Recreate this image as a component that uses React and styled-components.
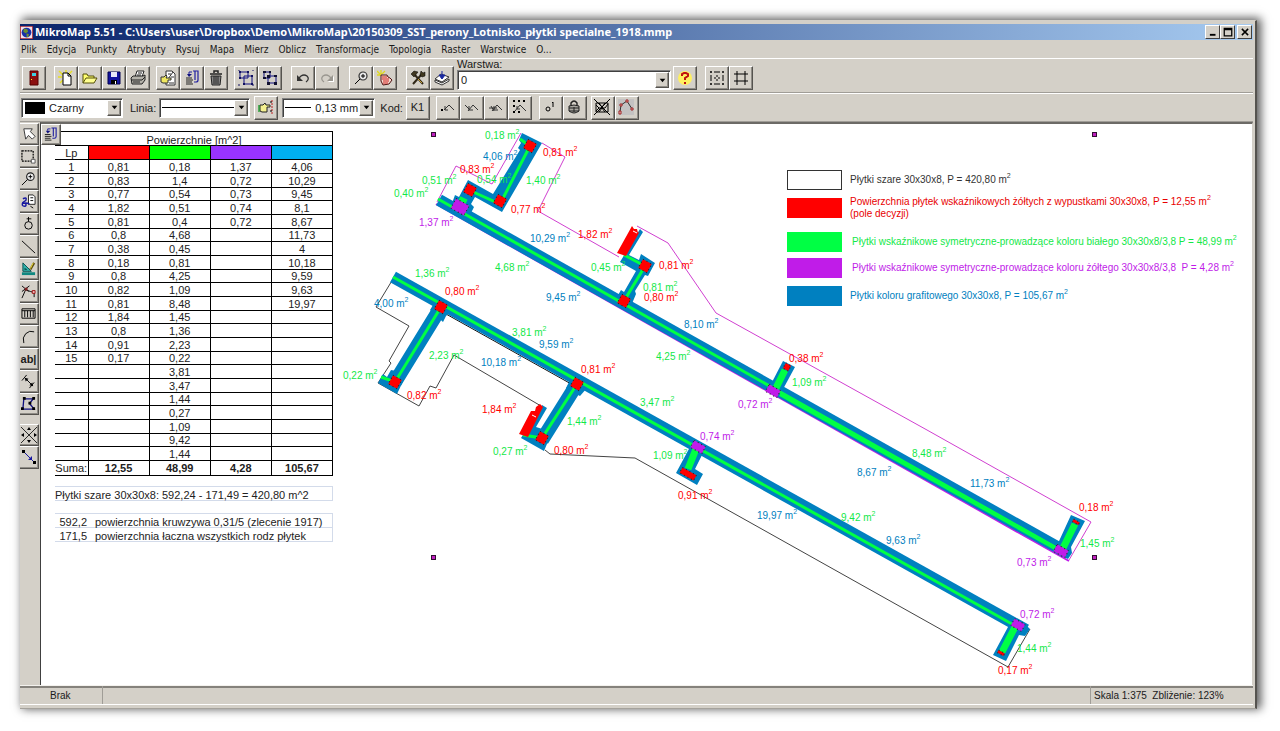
import styled, { createGlobalStyle, css } from "styled-components";
import { useState } from "react";

const GREEN = "#12e848";
const TILE_GREEN = "#00ff44";
const BLUE = "#0080c0";
const RED = "#ff0000";
const PURPLE = "#c01ce8";
const INK = "#000000";

const GlobalStyle = createGlobalStyle`
  * {
    box-sizing: border-box;
  }
  body {
    margin: 0;
    background: #fff;
    color: #1a1a1a;
    font-family: "Liberation Sans", Arial, sans-serif;
    font-size: 11px;
  }
  button, select {
    font: inherit;
    color: inherit;
  }
`;

const Page = styled.div`
  display: flex;
  min-height: 100vh;
  padding: 20px 23px 22px 20px;
  overflow: hidden;
`;

const Window = styled.div`
  flex: 1;
  min-width: 0;
  display: flex;
  flex-direction: column;
  background: #d4d0c8;
  border-top: 1px solid #d4d0c8;
  border-right: 2px solid #55534f;
  border-bottom: 1px solid #a5a29c;
  box-shadow: 3px -1px 9px 1px rgba(0, 0, 0, 0.65);
  padding: 3px 2px 3px 0;
`;

const TitleBar = styled.header`
  display: flex;
  align-items: center;
  height: 16px;
  padding-right: 1px;
  background: linear-gradient(to right, #0a246a, #a6caf0);
  color: #fff;
  font-family: "Noto Sans", "DejaVu Sans", sans-serif;
  font-weight: bold;
  font-size: 11px;
  line-height: 16px;
  white-space: nowrap;
  & h1 {
    flex: 1;
    margin: 0 0 0 2px;
    font-size: inherit;
  }
`;

const WindowButton = styled.button`
  display: flex;
  align-items: center;
  justify-content: center;
  width: 15px;
  height: 14px;
  margin-left: ${(props) => (props.$apart ? "2px" : "0")};
  padding: 0;
  background: #d4d0c8;
  border: 1px solid;
  border-color: #fff #404040 #404040 #fff;
`;

const MenuBar = styled.nav`
  display: flex;
  align-items: center;
  gap: 10px;
  height: 18px;
  padding: 0 1px;
  font-family: "DejaVu Sans Condensed", "DejaVu Sans", sans-serif;
  font-size: 10px;
  white-space: nowrap;
  & a {
    color: inherit;
    text-decoration: none;
  }
`;

const Toolbar = styled.div`
  display: flex;
  align-items: ${(props) => (props.$tall ? "flex-end" : "center")};
  height: ${(props) => (props.$tall ? "35px" : "29px")};
  padding: ${(props) => (props.$tall ? "0 0 2px 2px" : "0 0 0 1px")};
  border-top: 1px solid #fff;
  border-bottom: 1px solid #a09d97;
  white-space: nowrap;
`;

const Group = styled.div`
  display: flex;
  align-items: center;
  margin-right: ${(props) => props.$after || "6px"};
`;

const bevel = css`
  border: 1px solid;
  border-color: #fff #55534f #55534f #fff;
  box-shadow: inset -1px -1px 0 #8f8c86;
`;

const ToolButton = styled.button`
  display: flex;
  align-items: center;
  justify-content: center;
  width: 24px;
  height: 24px;
  padding: 0 1px 1px 0;
  background: #d4d0c8;
  ${bevel}
`;

const SideBar = styled.div`
  display: flex;
  flex-direction: column;
  width: 19px;
  padding-top: 1px;
  & button {
    width: 19px;
    height: 22px;
    border-left: 0;
  }
  & button:nth-child(even) {
    height: 23px;
  }
`;

const SideGap = styled.div`
  height: 9px;
`;

const ComboBox = styled.span`
  display: grid;
  align-items: center;
  width: ${(props) => props.$width};
  height: 20px;
  background: #fff;
  border: 1px solid;
  border-color: #808080 #fff #fff #808080;
  box-shadow: inset 1px 1px 0 #404040;
  & > * {
    grid-area: 1 / 1;
  }
  & select {
    width: 100%;
    height: 18px;
    padding: 0 0 0 ${(props) => props.$indent || "3px"};
    border: 0;
    background: none;
    appearance: none;
  }
`;

const ComboArrow = styled.span`
  justify-self: end;
  display: flex;
  align-items: center;
  justify-content: center;
  width: 14px;
  height: 16px;
  margin-right: 1px;
  background: #d4d0c8;
  pointer-events: none;
  ${bevel}
`;

const Swatch = styled.span`
  width: 20px;
  height: 12px;
  margin-left: 3px;
  background: #000;
`;

const LineSample = styled.span`
  width: ${(props) => props.$width};
  height: 1px;
  margin-left: 2px;
  background: #000;
`;

const Label = styled.label`
  margin-right: 3px;
`;

const LayerField = styled.div`
  display: flex;
  flex-direction: column;
  margin: 0 2px 0 -3px;
  flex: none;
  line-height: 12px;
`;

const Workspace = styled.div`
  flex: 1;
  display: flex;
`;

const Canvas = styled.main`
  position: relative;
  flex: 1;
  min-width: 0;
  display: flex;
  align-items: flex-start;
  margin-left: 1px;
  background: #fff;
  border-top: 2px solid #6c6a66;
  border-left: 1px solid #404040;
  border-right: 1px solid #d4d0c8;
  overflow: hidden;
`;

const SheetButton = styled(ToolButton)`
  position: absolute;
  top: 0;
  left: 0;
  width: 20px;
  height: 21px;
`;

const Sheet = styled.section`
  flex: none;
  width: 299px;
  padding: 7px 7px 0 14px;
  color: #222;
`;

const AreaTable = styled.table`
  width: 278px;
  table-layout: fixed;
  border-collapse: collapse;
  font-size: 11px;
  line-height: 11px;
  text-align: center;
  & caption {
    height: 14px;
    padding: 2px 0 0;
    border: 1px solid #000;
    border-bottom: 0;
    line-height: 12px;
  }
  & th, & td {
    height: 14px;
    padding: 1px 0 0;
    border: 1px solid #000;
    font-weight: normal;
  }
  & tr > :first-child {
    border-left: 0;
  }
  & tbody tr:nth-child(3n) > * {
    height: 13px;
    padding: 0;
  }
  & tfoot td {
    font-weight: bold;
  }
  & tfoot > tr > * {
    height: 15px;
  }
`;

const HeadCell = styled.th`
  background: ${(props) => props.$color || "none"};
`;

const Notes = styled.div`
  margin-top: 10px;
  color: #222;
`;

const Note = styled.p`
  display: flex;
  gap: 8px;
  height: 14px;
  margin: 0 0 ${(props) => props.$after || "0"};
  border: 1px solid #d3dbea;
  border-width: 1px 1px 0 0;
  line-height: 16px;
  white-space: nowrap;
  box-shadow: 0 1px 0 #d3dbea;
  & b {
    width: 32px;
    font-weight: normal;
    text-align: right;
  }
`;

const Plan = styled.section`
  flex: none;
  display: grid;
  & > * {
    grid-area: 1 / 1;
  }
  & text {
    font-size: 10px;
  }
  & tspan {
    font-size: 7px;
  }
`;

const Legend = styled.ul`
  width: 464px;
  margin: 46px 0 0 447px;
  padding: 0;
  list-style: none;
  font-size: 10px;
  line-height: 12px;
`;

const LegendItem = styled.li`
  display: flex;
  align-items: center;
  gap: ${(props) => (props.$wide ? "10px" : "8px")};
  height: 20px;
  margin-bottom: ${(props) => props.$after || "8px"};
  color: ${(props) => props.$color};
  white-space: pre;
  & i {
    width: 55px;
    height: 20px;
    background: ${(props) => props.$fill};
    border: ${(props) => (props.$fill === "#fff" ? "1px solid #333" : "0")};
  }
  & sup {
    font-size: 7px;
    line-height: 0;
    vertical-align: 5px;
  }
`;

const StatusBar = styled.footer`
  display: flex;
  height: 20px;
  font-size: 10px;
  line-height: 16px;
  border-top: 1px solid #f4f2ee;
  border-bottom: 1px solid #fff;
  box-shadow: inset 0 2px 0 #85827c;
  & span {
    padding: 2px 3px 0;
    border-right: 1px solid #a09d97;
  }
`;

const StatusMode = styled.span`
  width: 83px;
  && {
    padding-left: 30px;
  }
`;

const StatusFill = styled.span`
  flex: 1;
`;

const StatusScale = styled.span`
  width: 162px;
  white-space: pre;
  && {
    border-right: 0;
  }
`;

const line = { fill: "none", stroke: INK };
const navy = { fill: "none", stroke: "#101080", strokeWidth: 1.4 };

// every glyph is drawn on a 16 x 16 grid
const glyphs = {
  globe: (
    <>
      <path d="M0 0H16V16H0Z" fill="#f3e3ea" stroke="#a02030" strokeWidth="2" />
      <circle cx="8" cy="8" r="6" fill="#1830a8" />
      <path d="M5 3l4 1 1 3-3 2-3-2zM8 9l3 1-1 4-2-1z" fill="#6f8f30" />
    </>
  ),
  exit: (
    <>
      <path d="M4 1H12V15H4Z" fill="#8c1010" stroke="#500" />
      <path d="M6 3h4v3H6z" fill="#3fd0e0" />
      <path d="M5 9h1v1H5z" fill="#ff0" />
    </>
  ),
  fresh: (
    <>
      <path d="M1 1l4 4M8 0v4M0 7h4M2 13l3-3M14 1l-3 3" stroke="#e8e020" strokeWidth="1.4" />
      <path d="M5 3h5l3 3v9H5z" fill="#fff" stroke={INK} />
      <path d="M10 3v3h3" {...line} />
    </>
  ),
  open: (
    <>
      <path d="M1 13V4h4l1 2h6v2" fill="#ffff70" stroke="#55500a" />
      <path d="M1 13L4 8h11l-3 5z" fill="#ffff90" stroke="#55500a" />
    </>
  ),
  save: (
    <>
      <path d="M2 2H14V14H2Z" fill="#1414a0" stroke="#000050" />
      <path d="M5 2h6v5H5z" fill="#e8e8f8" />
      <path d="M5 10h6v4H5z" fill="#000" />
      <path d="M9 11h1v3H9z" fill="#fff" />
    </>
  ),
  print: (
    <>
      <path d="M5 7L7 1h7l-2 6" fill="#fff" stroke="#222" />
      <path d="M1 8l2-2h10l2-1v5l-3 4H2z" fill="#b4b2aa" stroke="#222" />
      <path d="M1 10h11l3-3M8 3h4M7 5h4M3 12h7" fill="none" stroke="#222" />
    </>
  ),
  hand: (
    <>
      <path d="M6 1h6l3 3v11H6z" fill="#fff" stroke="#333" />
      <path d="M8 4h3M11 7h3M9 13h5M13 2L8 9" fill="none" stroke="#333" />
      <path d="M1 7h3l2-2 1 1-1 2h5v2H8v3H3L1 12z" fill="#f0e860" stroke="#333" />
    </>
  ),
  report: (
    <>
      <path d="M9 1h5v9q0 2-2 2h-2M11 1v9" fill="none" stroke="#2020a0" strokeWidth="1.2" />
      <path d="M8 2H5v2" fill="none" stroke="#2020a0" />
      <path d="M3 4h5L5 7z" fill="#101080" />
      <path d="M2 8h6M2 10h7M2 12h6M2 14h7" stroke="#222" />
    </>
  ),
  trash: (
    <>
      <path d="M2 4h12M6 3V1h4v2" stroke="#222" fill="none" strokeWidth="1.5" />
      <path d="M3 6h10l-1 9H4z" fill="#888" stroke="#222" />
      <path d="M6 6v8M8 6v8M10 6v8" stroke="#222" />
    </>
  ),
  group: (
    <>
      <path d="M2 2h8v6H2zM6 6h8v8H6z" {...navy} strokeWidth="1" />
      <path d="M1 1h2v2H1zM9 1h2v2H9zM1 7h2v2H1zM13 5h2v2h-2zM5 13h2v2H5zM13 13h2v2h-2z" fill="#101060" />
      <path d="M0 0h2M14 0h2M0 15h2M14 15h2" stroke="#101060" />
    </>
  ),
  ungroup: (
    <>
      <path d="M2 2h6v6H2zM6 6h8v7H6z" {...navy} strokeWidth="1" />
      <path d="M1 1h3v2H1zM7 1h2v2H7zM1 7h3v2H1zM12 5h3v2h-3zM5 12h3v3H5zM12 12h3v3h-3zM5 5h3v3H5z" fill="#101030" />
    </>
  ),
  undo: (
    <>
      <path d="M3 9l3-3q3-2 6 0 3 3-1 6" fill="none" stroke="#333" strokeWidth="1.3" />
      <path d="M2 5v6h6z" fill="#333" />
    </>
  ),
  redo: (
    <>
      <path d="M13 9l-3-3q-3-2-6 0-3 3 1 6" fill="none" stroke="#9a9790" strokeWidth="1.3" />
      <path d="M15 6v6H9z" fill="#fff" />
      <path d="M14 5v6H8z" fill="#9a9790" />
    </>
  ),
  find: (
    <>
      <circle cx="10" cy="6" r="4" fill="#e8e8e8" stroke="#333" strokeWidth="1.2" />
      <path d="M9 5h2v2H9zM7 9l-5 5" {...line} />
    </>
  ),
  redHand: (
    <>
      <path d="M0 1l4 4M4 0v4M0 5h4M8 1L5 4" stroke="#e0d820" strokeWidth="1.3" />
      <path d="M4 5h6l1 2 2 1 2 2-3 4-6 1-2-4z" fill="#f4dcd0" stroke="#501010" />
      <path d="M5 7h5M5 9h7M6 11h6M6 13h5" stroke="#d02020" />
    </>
  ),
  tools: (
    <>
      <path d="M3 14L12 4M4 4l9 10" stroke="#302818" strokeWidth="2" />
      <path d="M1 4l3-3 4 1-4 5zM10 5l1-4 2 2 2-1v4l-3 1z" fill="#403820" stroke={INK} strokeWidth=".5" />
      <path d="M8 9l4 4" stroke="#c8a030" />
    </>
  ),
  layers: (
    <>
      <path d="M1 12l7 3 7-4v-2l-7 4-7-3z" fill="#fff" stroke="#333" />
      <path d="M1 9l6-5 8 3-7 5z" fill="#fff" stroke="#333" />
      <path d="M8 1v4M5 5l3 4 3-4z" fill="#1828a0" stroke="#1828a0" />
    </>
  ),
  help: (
    <>
      <circle cx="8" cy="8" r="7" fill="#fff060" />
      <path d="M5 6V4l2-1h2l2 1v2L8 8v2" fill="none" stroke="#c01010" strokeWidth="2" />
      <path d="M7 12h2v2H7z" fill="#c01010" />
    </>
  ),
  grid: (
    <path
      d="M1 2h15M1 8h15M1 14h15M2 1v15M8 1v15M14 1v15"
      {...line}
      strokeDasharray="2 2"
    />
  ),
  hash: <path d="M4 1v14M12 1v14M1 4h14M1 11h14" {...line} />,
  pointHand: (
    <>
      <path d="M2 6h3l2-2 1 2h4v2H9v5H4l-2-1z" fill="#f4f090" stroke="#222" />
      <path d="M1 6v7" stroke="#20a030" strokeWidth="1.4" />
      <path d="M14 1v14" stroke="#c02020" strokeDasharray="2 1" />
      <path d="M12 3h2M12 12h2" stroke={INK} />
    </>
  ),
  node1: (
    <>
      <path d="M5 11l5-5 5 5M6 7v4h3" fill="none" stroke="#333" />
      <path d="M2 10h2v2H2z" fill={INK} />
    </>
  ),
  node2: <path d="M2 6l4 4M5 12l5-6 5 5M6 7v4h4" fill="none" stroke="#333" />,
  node3: <path d="M2 9h8M4 7l3 5M5 12l5-6 5 5M7 7v4h4" fill="none" stroke="#333" />,
  node4: (
    <>
      <path d="M2 1h2v2H2zM7 1h2v2H7zM12 1h2v2h-2zM2 6h2v2H2zM2 12h2v2H2zM7 12h2v2H7z" fill={INK} />
      <path d="M4 12l5-6 6 6M6 7v3h3" fill="none" stroke="#333" />
    </>
  ),
  point1: (
    <>
      <circle cx="6" cy="10" r="2" {...line} />
      <path d="M10 4l1-1v5" {...line} />
    </>
  ),
  lock: (
    <>
      <path d="M5 7V4q3-4 6 0v3" fill="none" stroke="#222" strokeWidth="1.4" />
      <path d="M3 7q5-2 10 0v5q-5 4-10 0z" fill="#a8a6a0" stroke="#222" />
      <path d="M3 9h10M3 12h10M8 8v5" stroke="#222" />
    </>
  ),
  noMesh: (
    <>
      <path d="M2 4h12v9H2zM2 6l3 3-3 3M5 9h6M11 9l3-4M5 4l3 4 3-4M5 13l3-4 3 4" {...line} />
      <path d="M0 0l16 16M16 0L0 16" {...line} />
    </>
  ),
  curve: (
    <>
      <path d="M0 0h16v16H0z" fill="#c4c2c2" />
      <path d="M2 13L3 6l6-4 5 8" fill="none" stroke="#333" />
      <path d="M1 12h2v3H1zM2 5h2v2H2zM8 1h2v2H8zM13 9h2v2h-2z" fill="#f0d0d0" stroke="#a02020" />
    </>
  ),
  select: <path d="M3 3h9l-2 3 5 5-3 3-4-4-3 4z" fill="#fff" stroke="#333" />,
  marquee: (
    <>
      <path d="M1 2h12v11H1z" {...line} strokeWidth="1.3" strokeDasharray="2 1" />
      <path d="M11 11h4v4h-4z" fill="#fff" stroke="#555" />
    </>
  ),
  zoom: (
    <>
      <circle cx="10" cy="6" r="4" fill="#eee" stroke="#222" strokeWidth="1.2" />
      <path d="M8 6h4M10 4v4M7 9l-6 6" {...line} />
    </>
  ),
  pan: (
    <>
      <path d="M8 1h5l2 2v8H8z" fill="#fff" stroke="#222" />
      <path d="M10 4h3M10 7h3M10 13l3 2" {...line} />
      <path d="M2 5q5-2 3 2l-3 2q-2 4 2 4 2 0 1-3M2 10q5-1 7 1" fill="none" stroke="#1818a0" strokeWidth="1.6" />
    </>
  ),
  station: (
    <>
      <circle cx="8" cy="10" r="4" {...line} />
      <path d="M8 6V1M6 3h5" {...line} />
    </>
  ),
  line: <path d="M1 2l14 13" {...line} />,
  measure: (
    <>
      <path d="M2 2v9h9zM4 8v1h2z" fill="#30b0a8" stroke="#0a5050" />
      <path d="M1 12h14v3H1z" fill="#108880" />
      <path d="M14 2L10 9" stroke="#605010" strokeWidth="2.4" />
      <path d="M13 2L10 8" stroke="#f0e040" />
    </>
  ),
  split: (
    <>
      <path d="M1 15L5 6l5 2 4 1v5M1 2l7 6M9 2L1 8" {...line} />
      <path d="M4 4h3v3H4z" fill="#802020" />
      <path d="M12 7h3v3h-3z" fill="#f0c0c0" stroke="#a01010" />
    </>
  ),
  ruler: <path d="M1 3h14v10H1zM4 5v7M7 5v7M10 5v7M13 5v7M1 5h14" {...line} />,
  arc: <path d="M3 15Q1 9 5 5t9-2" {...line} />,
  offset: (
    <>
      <path d="M5 5l7 7M1 7l5-6M9 15l5-6" {...line} />
      <path d="M4 4l4 1-3 3zM13 13l-4-1 3-3z" fill={INK} />
    </>
  ),
  area: (
    <>
      <path d="M3 3h10L9 8l5 6H2z" {...navy} />
      <path d="M2 1h3v3H2zM12 1h3v3h-3zM8 6h3v3H8zM0 12h3v3H0zM12 12h3v3h-3z" fill={INK} />
    </>
  ),
  fit: (
    <>
      <path d="M0 0l16 16M16 0L0 16" {...line} strokeWidth=".8" />
      <path d="M6 3l2-3 2 3zM6 13l2 3 2-3zM3 6L0 8l3 2zM13 6l3 2-3 2z" fill={INK} />
    </>
  ),
  vector: (
    <>
      <path d="M3 3l9 9" stroke="#1818a0" />
      <path d="M1 1h3v3H1zM12 12h3v3h-3z" fill={INK} />
      <path d="M11 7v4H7z" fill="#1818a0" />
    </>
  ),
  down: <path d="M3 5h10l-5 6z" fill={INK} />,
  minimize: <path d="M3 11h9v3H3z" fill={INK} />,
  maximize: <path d="M2 2h12v12H2zM2 4h12" {...line} strokeWidth="2" />,
  close: <path d="M3 3l10 10M13 3L3 13" {...line} strokeWidth="2.4" />,
};

function Icon({ name, size = 16 }) {
  return (
    <svg width={size} height={size} viewBox="0 0 16 16" aria-hidden="true">
      {glyphs[name]}
    </svg>
  );
}

function Tools({ items, after }) {
  return (
    <Group $after={after}>
      {items.map((name) => (
        <ToolButton key={name} type="button" aria-label={name}>
          <Icon name={name} />
        </ToolButton>
      ))}
    </Group>
  );
}

function Combo({ id, label, width, indent, value, children }) {
  return (
    <ComboBox $width={width} $indent={indent}>
      {children}
      <select id={id} aria-label={label} defaultValue={value}>
        <option value={value}>{value}</option>
      </select>
      <ComboArrow>
        <Icon name="down" size={9} />
      </ComboArrow>
    </ComboBox>
  );
}

const menu = [
  "Plik", "Edycja", "Punkty", "Atrybuty", "Rysuj", "Mapa", "Mierz", "Oblicz",
  "Transformacje", "Topologia", "Raster", "Warstwice", "O...",
];

const sideTools = [
  "select", "marquee", "zoom", "pan", "station", "line", "measure",
  "split", "ruler", "arc", "text", "offset", "area",
];

const columns = [
  ["0,81", "0,83", "0,77", "1,82", "0,81", "0,8", "0,38", "0,18", "0,8", "0,82", "0,81", "1,84", "0,8", "0,91", "0,17"],
  ["0,18", "1,4", "0,54", "0,51", "0,4", "4,68", "0,45", "0,81", "4,25", "1,09", "8,48", "1,45", "1,36", "2,23", "0,22", "3,81", "3,47", "1,44", "0,27", "1,09", "9,42", "1,44"],
  ["1,37", "0,72", "0,73", "0,74", "0,72"],
  ["4,06", "10,29", "9,45", "8,1", "8,67", "11,73", "4", "10,18", "9,59", "9,63", "19,97"],
];
const sums = ["12,55", "48,99", "4,28", "105,67"];

// x, y, value, colour
const labels = [
  [485, 139, "0,18", GREEN], [483, 160, "4,06", BLUE], [543, 156, "0,81", RED],
  [460, 173, "0,83", RED], [422, 184, "0,51", GREEN], [477, 183, "0,54", GREEN],
  [526, 184, "1,40", GREEN], [394, 197, "0,40", GREEN], [511, 213, "0,77", RED],
  [419, 226, "1,37", PURPLE], [530, 242, "10,29", BLUE], [578, 238, "1,82", RED],
  [495, 271, "4,68", GREEN], [591, 271, "0,45", GREEN], [415, 277, "1,36", GREEN],
  [445, 295, "0,80", RED], [374, 307, "4,00", BLUE], [546, 301, "9,45", BLUE],
  [512, 336, "3,81", GREEN], [659, 269, "0,81", RED], [643, 291, "0,81", GREEN],
  [644, 301, "0,80", RED], [684, 328, "8,10", BLUE], [656, 360, "4,25", GREEN],
  [789, 362, "0,38", RED], [792, 386, "1,09", GREEN], [738, 408, "0,72", PURPLE],
  [640, 406, "3,47", GREEN], [700, 440, "0,74", PURPLE], [539, 348, "9,59", BLUE],
  [481, 366, "10,18", BLUE], [429, 359, "2,23", GREEN], [343, 379, "0,22", GREEN],
  [581, 373, "0,81", RED], [407, 399, "0,82", RED], [482, 413, "1,84", RED],
  [567, 425, "1,44", GREEN], [493, 455, "0,27", GREEN], [554, 454, "0,80", RED],
  [653, 459, "1,09", GREEN], [678, 499, "0,91", RED], [857, 476, "8,67", BLUE],
  [757, 519, "19,97", BLUE], [841, 521, "9,42", GREEN], [886, 544, "9,63", BLUE],
  [912, 457, "8,48", GREEN], [970, 487, "11,73", BLUE], [1079, 511, "0,18", RED],
  [1080, 547, "1,45", GREEN], [1017, 566, "0,73", PURPLE], [1020, 618, "0,72", PURPLE],
  [1017, 652, "1,44", GREEN], [998, 674, "0,17", RED],
];

const markers = [[433, 134], [1094, 134], [433, 557], [1094, 557]];

// junction tiles: centre, size, colour
const tiles = [
  [530, 146, 10, 10, RED], [470, 190, 10, 10, RED], [500, 201, 10, 10, RED],
  [645, 266, 10, 10, RED], [624, 301, 10, 10, RED], [441, 307, 10, 10, RED],
  [395, 382, 10, 10, RED], [577, 384, 10, 10, RED], [542, 438, 10, 10, RED],
  [787, 367, 6, 6, RED], [688, 474, 16, 6, RED], [1076, 522, 7, 3, RED],
  [1001, 653, 7, 3, RED], [460, 207, 15, 11, PURPLE], [773, 391, 13, 8, PURPLE],
  [698, 447, 13, 8, PURPLE], [1061, 551, 13, 8, PURPLE], [1018, 625, 12, 8, PURPLE],
];

function PlanDrawing() {
  return (
    <svg width="911" height="559" viewBox="340 124 911 559" role="img" aria-label="Plan">
      {/* boundaries */}
      <g fill="none" stroke="#d040d0">
        <path d="M521 133L492 184L456 166L437 202M542 143L565 157L538 211L619 257" />
        <path d="M637 226L668 243L716 313L927 430L1091 522L1069 560" />
      </g>
      <g fill="none" stroke="#444">
        <path d="M393 279L376 307L409 326L389 361L391 363L378 383L419 406L430 386L436 388L454 355L541 406" />
        <path d="M545 450L550 454L635 458L1008 667L1030 629" />
      </g>
      {/* graphite tiles */}
      <path d="M436 204L1069 561" stroke={PURPLE} strokeWidth="2" />
      <path d="M446 314L573 385" stroke="#111" strokeWidth="1" />
      <g fill="none" stroke={BLUE} strokeWidth="12">
        <path d="M439 200L1066 552" />
        <path d="M393 277L1026 630" />
        <path d="M441 307L395 382M577 384L542 440" strokeWidth="14" />
      </g>
      <g fill={BLUE}>
        <path d="M522 133L542 143L502 212L475 197L471 204L474 207L469 217L451 206L455 195L459 197L468 180L493 194L520 150L518 148L521 143L519 140Z" />
        <path d="M640 229L643 232L629 255L639 260L641 254L655 263L648 276L645 275L635 291L636 294L631 306L617 297L621 290L624 292L636 271L620 262Z" />
        <path d="M391 370L407 373L397 394L378 383L383 374L387 377Z" />
        <path d="M542 405L547 408L536 427L552 432L544 451L521 438Z" />
        <path d="M566 388L571 378L587 388L580 396L574 393L572 396ZM430 310L436 300L453 309L446 316L443 322Z" />
        <path d="M783 361L795 367L782 391L770 386Z" />
        <path d="M690 447L702 455L695 469L703 474L697 485L676 473Z" />
        <path d="M1071 515L1085 521L1071 547L1072 553L1068 559L1054 552Z" />
        <path d="M1025 624L1030 629L1025 636L1019 635L1006 661L993 655L1008 627Z" />
      </g>
      {/* guiding strips */}
      <g fill="none" stroke={TILE_GREEN} strokeWidth="3">
        <path d="M438 199L1055 547" />
        <path d="M393 277L1012 624" />
        <path d="M471 191L500 204L530 146L520 139M624 301L645 266L624 255" />
        <path d="M441 307L395 382L381 377M577 384L542 438L523 435" />
        <path d="M780 394L1055 548" strokeWidth="4" />
        <path d="M464 198L460 206" strokeWidth="8" />
        <path d="M785 370L776 388M696 449L688 469M1075 524L1063 548M1015 627L1002 652" strokeWidth="7" />
      </g>
      {/* decision fields along the stairs */}
      <g fill={RED}>
        <path d="M632 226L634 229L637 229L638 233L640 231L626 256L617 253Z" />
        <path d="M540 404L543 407L528 437L519 434L531 411L535 411L536 407Z" />
      </g>
      <path d="M633 231l4 2M532 415l4 2" stroke="#fff" />
      {tiles.map(([x, y, w, h, color], i) => (
        <rect
          key={i}
          x={x - w / 2}
          y={y - h / 2}
          width={w}
          height={h}
          fill={color}
          stroke="#222"
          strokeWidth="1"
          strokeDasharray="1 3"
          transform={`rotate(29 ${x} ${y})`}
        />
      ))}
      {labels.map(([x, y, value, color], i) => (
        <text key={i} x={x} y={y} fill={color}>
          {value} m
          <tspan dy="-5">2</tspan>
        </text>
      ))}
      {markers.map(([x, y]) => (
        <rect key={`${x}-${y}`} x={x - 1.5} y={y - 1.5} width="4" height="4" fill="#c020c0" stroke="#301030" />
      ))}
    </svg>
  );
}

const legend = [
  { text: "Płytki szare 30x30x8, P = 420,80 m", color: "#333", fill: "#fff" },
  {
    text: "Powierzchnia płytek wskaźnikowych żółtych z wypustkami 30x30x8, P = 12,55 m",
    more: "\n(pole decyzji)", color: "#e80000", fill: RED, after: "14px",
  },
  {
    text: "Płytki wskaźnikowe symetryczne-prowadzące koloru białego 30x30x8/3,8 P = 48,99 m",
    color: GREEN, fill: TILE_GREEN, after: "6px", wide: true,
  },
  {
    text: "Płytki wskaźnikowe symetryczne-prowadzące koloru żółtego 30x30x8/3,8  P = 4,28 m",
    color: PURPLE, fill: PURPLE, wide: true,
  },
  { text: "Płytki koloru grafitowego 30x30x8, P = 105,67 m", color: BLUE, fill: BLUE },
];

function AreaSheet() {
  return (
    <Sheet>
      <AreaTable>
        <caption>Powierzchnie [m^2]</caption>
        <colgroup>
          <col width="33" />
          <col />
          <col />
          <col />
          <col />
        </colgroup>
        <thead>
          <tr>
            <HeadCell>Lp</HeadCell>
            <HeadCell $color="#ff0000" aria-label="czerwone" />
            <HeadCell $color="#00ff00" aria-label="zielone" />
            <HeadCell $color="#9933ff" aria-label="fioletowe" />
            <HeadCell $color="#00b0f0" aria-label="niebieskie" />
          </tr>
        </thead>
        <tbody>
          {columns[1].map((_, row) => (
            <tr key={row}>
              <td>{row < 15 ? row + 1 : ""}</td>
              {columns.map((column, i) => (
                <td key={i}>{column[row]}</td>
              ))}
            </tr>
          ))}
        </tbody>
        <tfoot>
          <tr>
            <th>Suma:</th>
            {sums.map((sum) => (
              <td key={sum}>{sum}</td>
            ))}
          </tr>
        </tfoot>
      </AreaTable>
      <Notes>
        <Note $after="13px">Płytki szare 30x30x8: 592,24 - 171,49 = 420,80 m^2</Note>
        <Note>
          <b>592,2</b> powierzchnia kruwzywa 0,31/5 (zlecenie 1917)
        </Note>
        <Note>
          <b>171,5</b> powierzchnia łaczna wszystkich rodz płytek
        </Note>
      </Notes>
    </Sheet>
  );
}

function App() {
  const [tool, setTool] = useState("select");

  return (
    <Page>
      <GlobalStyle />
      <Window>
        <TitleBar>
          <Icon name="globe" size={13} />
          <h1>
            MikroMap 5.51 - C:\Users\user\Dropbox\Demo\MikroMap\20150309_SST_perony_Lotnisko_płytki specialne_1918.mmp
          </h1>
          <WindowButton type="button" aria-label="Minimalizuj">
            <Icon name="minimize" size={10} />
          </WindowButton>
          <WindowButton type="button" aria-label="Maksymalizuj">
            <Icon name="maximize" size={10} />
          </WindowButton>
          <WindowButton type="button" aria-label="Zamknij" $apart>
            <Icon name="close" size={10} />
          </WindowButton>
        </TitleBar>
        <MenuBar>
          {menu.map((item) => (
            <a key={item} href="#menu">{item}</a>
          ))}
        </MenuBar>
        <Toolbar $tall>
          <Tools items={["exit"]} after="8px" />
          <Tools items={["fresh", "open", "save", "print"]} />
          <Tools items={["hand", "report", "trash"]} />
          <Tools items={["group", "ungroup"]} after="9px" />
          <Tools items={["undo", "redo"]} after="10px" />
          <Tools items={["find", "redHand"]} after="9px" />
          <Tools items={["tools", "layers"]} />
          <LayerField>
            <label htmlFor="layer">Warstwa:</label>
            <Combo id="layer" width="214px" value="0" />
          </LayerField>
          <Tools items={["help"]} after="8px" />
          <Tools items={["grid", "hash"]} />
        </Toolbar>
        <Toolbar>
          <Group $after="7px">
            <Combo label="Kolor" width="102px" indent="27px" value="Czarny">
              <Swatch />
            </Combo>
          </Group>
          <Label htmlFor="line">Linia:</Label>
          <Group $after="4px">
            <Combo id="line" width="91px" value="">
              <LineSample $width="75px" />
            </Combo>
          </Group>
          <Tools items={["pointHand"]} after="4px" />
          <Group $after="5px">
            <Combo label="Grubość" width="93px" indent="32px" value="0,13 mm">
              <LineSample $width="26px" />
            </Combo>
          </Group>
          <Label>Kod:</Label>
          <Group $after="6px">
            <ToolButton type="button">K1</ToolButton>
          </Group>
          <Tools items={["node1", "node2", "node3", "node4"]} after="7px" />
          <Tools items={["point1", "lock"]} after="4px" />
          <Tools items={["noMesh", "curve"]} />
        </Toolbar>
        <Workspace>
          <SideBar>
            {sideTools.map((name) => (
              <ToolButton
                key={name}
                type="button"
                aria-label={name}
                aria-pressed={tool === name}
                onClick={() => setTool(name)}
              >
                {name === "text" ? <b>ab|</b> : <Icon name={name} size={15} />}
              </ToolButton>
            ))}
            <SideGap />
            {["fit", "vector"].map((name) => (
              <ToolButton key={name} type="button" aria-label={name}>
                <Icon name={name} size={16} />
              </ToolButton>
            ))}
          </SideBar>
          <Canvas>
            <SheetButton type="button" aria-label="Raport">
              <Icon name="report" size={15} />
            </SheetButton>
            <AreaSheet />
            <Plan>
              <PlanDrawing />
              <Legend>
                {legend.map((item) => (
                  <LegendItem
                    key={item.text}
                    $color={item.color}
                    $fill={item.fill}
                    $after={item.after}
                    $wide={item.wide}
                  >
                    <i />
                    <span>
                      {item.text}
                      <sup>2</sup>
                      {item.more}
                    </span>
                  </LegendItem>
                ))}
              </Legend>
            </Plan>
          </Canvas>
        </Workspace>
        <StatusBar>
          <StatusMode>Brak</StatusMode>
          <StatusFill />
          <StatusScale>Skala 1:375  Zbliżenie: 123%</StatusScale>
        </StatusBar>
      </Window>
    </Page>
  );
}

export default App;
